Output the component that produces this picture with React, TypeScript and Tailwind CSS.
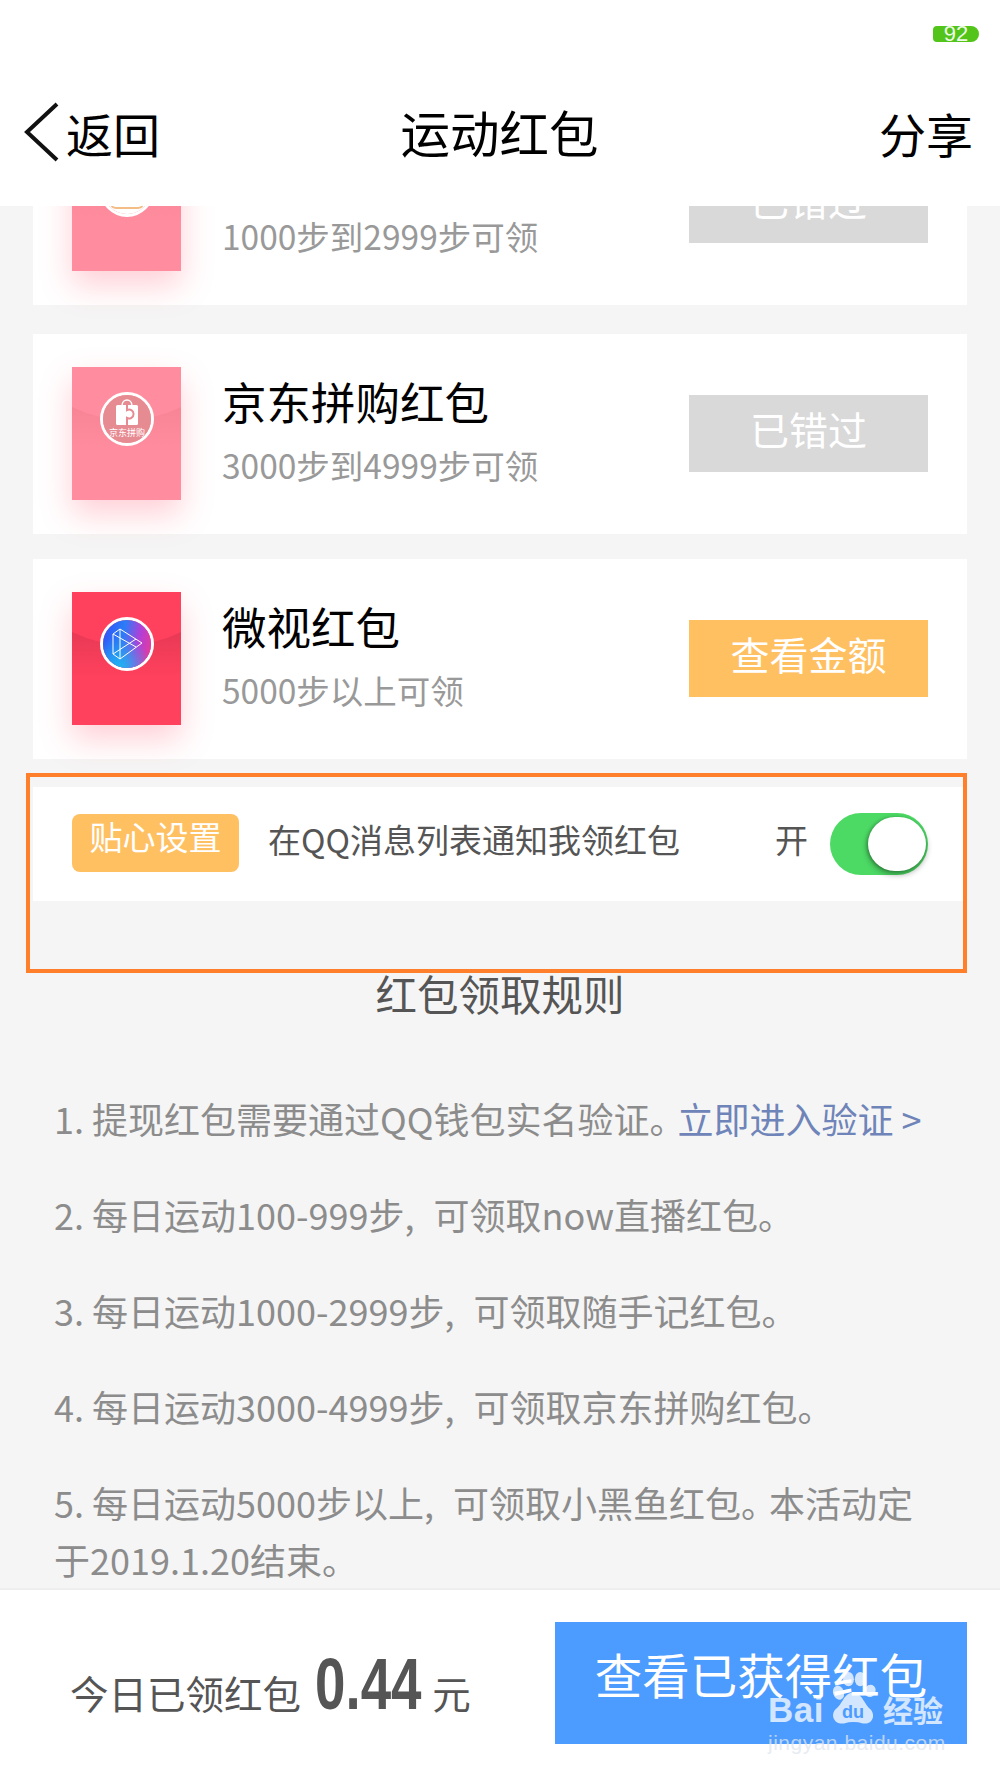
import React from "react";

const cjk = { fontFamily: '"Noto Sans CJK SC", "Noto Sans", sans-serif' };

function Envelope({ id, color, flap, children }: { id: string; color: string; flap: string; children?: React.ReactNode }) {
  return (
    <div className="relative h-[133px] w-[109px] shrink-0 shadow-[0_14px_30px_0_rgba(255,65,93,0.25)]" style={{ background: color }}>
      <svg className="absolute left-0 top-0" width="109" height="133" viewBox="0 0 109 133">
        <defs>
          <linearGradient id={id} x1="0" y1="40" x2="0" y2="85" gradientUnits="userSpaceOnUse">
            <stop offset="0" stopColor={flap} stopOpacity="0.65" />
            <stop offset="1" stopColor={flap} stopOpacity="0" />
          </linearGradient>
        </defs>
        <path d="M0 40 Q55 66 109 40 L109 85 L0 85 Z" fill={`url(#${id})`} />
      </svg>
      <div className="absolute left-[28px] top-[25px] h-[54px] w-[54px] overflow-hidden rounded-full border-[3px] border-white">
        {children}
      </div>
    </div>
  );
}

function Card({ title, sub, btn, active, icon }: { title: string; sub: string; btn: string; active?: boolean; icon: React.ReactNode }) {
  return (
    <div className="flex h-[200px] items-start bg-white px-[39px] pt-[33px]">
      {icon}
      <div className="ml-[41px] flex-1">
        <div className="mt-[4px] h-[60px] text-[44.5px] leading-[60px] text-black">{title}</div>
        <div className="mt-[12px] text-[33.5px] leading-[44px] text-[#999999]">{sub}</div>
      </div>
      <div className={`mt-[28px] flex h-[77px] w-[239px] items-center justify-center pb-[10px] text-[39px] text-white ${active ? "bg-[#ffc062]" : "bg-[#d9d9d9]"}`}>
        {btn}
      </div>
    </div>
  );
}

function Rule({ children }: { children: React.ReactNode }) {
  return <p className="text-[36px] leading-[57px] text-[#8c8c8c]">{children}</p>;
}

function Comma() {
  return <span className="mr-[11px]">, </span>;
}

function Stop() {
  return <span className="tracking-[-8px]">。</span>;
}

export default function App() {
  return (
    <div className="relative flex h-[1778px] w-[1000px] flex-col overflow-hidden bg-[#f5f5f5]" style={cjk}>
      {/* Status + nav */}
      <header className="relative z-10 h-[206px] shrink-0 bg-white">
        <div className="flex h-[72px] justify-end pr-[21px] pt-[26px]">
          <div className="flex h-[16px] w-[46px] items-center justify-center rounded-l-[4px] rounded-r-[8px] bg-[#52c41a] text-[22px] leading-none text-[#eefae6]" style={{ fontFamily: '"Liberation Sans", sans-serif' }}>
            92
          </div>
        </div>
        <div className="flex h-[134px] items-center justify-between pb-[14px] pl-[24px] pr-[27px]">
          <div className="flex w-[200px] items-center text-black">
            <svg width="36" height="60" viewBox="0 0 36 60" fill="none">
              <path d="M33 2 L3 30 L33 58" stroke="#111" strokeWidth="4" />
            </svg>
            <span className="ml-[6px] text-[47px] leading-none">返回</span>
          </div>
          <div className="ml-[2px] text-[49.5px] leading-none text-black">运动红包</div>
          <div className="flex w-[200px] justify-end text-[47px] leading-none text-black">分享</div>
        </div>
      </header>

      {/* Scrolled content */}
      <main className="min-h-0 flex-1 overflow-hidden">
        <div className="-mt-[101px] px-[33px]">
          <div className="flex flex-col gap-[29px]">
            <Card
              title="随手记红包"
              sub="1000步到2999步可领"
              btn="已错过"
              icon={
                <Envelope id="a" color="#ff8d9f" flap="#f2808f">
                  <div className="flex h-full w-full items-end justify-center bg-white pb-[5px]">
                    <div className="h-[16px] w-[34px] rounded-b-[6px] border-x-[2px] border-b-[2px] border-[#f3bd85]" />
                  </div>
                </Envelope>
              }
            />
            <Card
              title="京东拼购红包"
              sub="3000步到4999步可领"
              btn="已错过"
              icon={
                <Envelope id="b" color="#ff8d9f" flap="#f2808f">
                  <div className="flex h-full w-full flex-col items-center bg-[#e78b92]">
                    <svg className="mt-[3px] shrink-0" width="24" height="30" viewBox="0 0 24 30">
                      <path d="M7 8 C7 0 17 0 17 8" fill="none" stroke="#fff" strokeWidth="1.5" />
                      <rect x="1" y="7" width="22" height="20" rx="1.5" fill="#fff" />
                      <path d="M12 5 V12 A4.5 4.5 0 1 1 12 20 V28" fill="none" stroke="#e78b92" strokeWidth="2" />
                    </svg>
                    <div className="whitespace-nowrap text-[9px] leading-[10px] text-white">京东拼购</div>
                  </div>
                </Envelope>
              }
            />
            <div className="-mt-[4px]">
              <Card
                title="微视红包"
                sub="5000步以上可领"
                btn="查看金额"
                active
                icon={
                  <Envelope id="c" color="#ff415d" flap="#dc3550">
                    <div className="flex h-full w-full items-center justify-center bg-[radial-gradient(circle_at_35%_100%,#1fb4f0_0%,rgba(31,180,240,0)_55%),linear-gradient(100deg,#3350f5_0%,#2a7df8_40%,#b040d8_70%,#f03a90_100%)]">
                      <svg width="34" height="36" viewBox="0 0 34 36" fill="none" stroke="#fff" strokeWidth="1" strokeLinejoin="round">
                        <path d="M3 8 L10 3 L32 17 L10 33 L3 28 Z" />
                        <path d="M3 8 L26 21 M10 3 V33 M3 28 L26 13" />
                      </svg>
                    </div>
                  </Envelope>
                }
              />
            </div>
          </div>

          {/* Setting row */}
          <div className="mt-[28px] flex h-[114px] items-center bg-white px-[39px]">
            <div className="mb-[2px] flex h-[58px] w-[167px] items-start justify-center rounded-[8px] bg-[#ffc062] text-[33px] leading-[44px] text-white">
              贴心设置
            </div>
            <div className="ml-[29px] flex-1 pb-[10px] text-[33px] leading-[40px] text-[#555555]">在QQ消息列表通知我领红包</div>
            <div className="mr-[22px] pb-[10px] text-[33px] leading-[40px] text-[#555555]">开</div>
            <div className="relative h-[62px] w-[98px] rounded-full bg-[#4cd964]">
              <div className="absolute right-[2px] top-[4px] h-[54px] w-[58px] rounded-full bg-white shadow-[0_3px_6px_rgba(0,0,0,0.4),-2px_0_3px_rgba(0,0,0,0.15)]" />
            </div>
          </div>

          <h2 className="mt-[62px] text-center text-[41.5px] font-normal leading-[60px] text-[#555555]">红包领取规则</h2>

          <div className="mt-[67px] flex flex-col gap-[39px] pl-[21px] pr-[20px]">
            <Rule>
              1. 提现红包需要通过QQ钱包实名验证<Stop /><span className="text-[#6f84b8]">立即进入验证 &gt;</span>
            </Rule>
            <Rule>2. 每日运动100-999步<Comma />可领取now直播红包<Stop /></Rule>
            <Rule>3. 每日运动1000-2999步<Comma />可领取随手记红包<Stop /></Rule>
            <Rule>4. 每日运动3000-4999步<Comma />可领取京东拼购红包<Stop /></Rule>
            <Rule>5. 每日运动5000步以上<Comma />可领取小黑鱼红包<Stop />本活动定于2019.1.20结束<Stop /></Rule>
          </div>
        </div>
      </main>

      {/* Footer */}
      <footer className="z-10 flex h-[190px] shrink-0 items-start border-t-2 border-[#eeeeee] bg-white pl-[70px] pr-[33px] pt-[32px]">
        <div className="flex flex-1 items-baseline pt-[32px] text-[#555555]">
          <span className="text-[38.5px] leading-[60px]">今日已领红包</span>
          <span className="ml-[14px] mr-[-23px] inline-block origin-left scale-x-[0.76] text-[72px] font-bold leading-[60px]" style={{ fontFamily: '"Liberation Sans", sans-serif' }}>
            0.44
          </span>
          <span className="text-[38.5px] leading-[60px]">元</span>
        </div>
        <div className="flex h-[122px] w-[412px] items-start justify-center bg-[#4c9bff] pt-[20px] text-[47.5px] leading-[64px] text-white">
          查看已获得红包
        </div>
      </footer>

      {/* Annotation box */}
      <div className="pointer-events-none absolute left-[26px] top-[773px] z-20 h-[200px] w-[941px] border-[4px] border-[#ff7f2a]" />

      {/* Watermark */}
      <div className="pointer-events-none absolute left-[768px] top-[1672px] z-30 w-[190px] text-white opacity-75">
        <div className="flex h-[55px] items-end">
          <span className="-mb-[5px] w-[60px] text-[35px] font-bold leading-[44px] tracking-[0.5px]" style={{ fontFamily: '"Liberation Sans", sans-serif' }}>Bai</span>
          <svg width="50" height="56" viewBox="0 0 50 62" fill="currentColor">
            <ellipse cx="9" cy="24" rx="6" ry="8" transform="rotate(-20 9 24)" />
            <ellipse cx="20" cy="9" rx="6" ry="8" />
            <ellipse cx="33" cy="9" rx="6" ry="8" />
            <ellipse cx="44" cy="22" rx="6" ry="7" transform="rotate(20 44 22)" />
            <path d="M25 24 C15 24 14 36 6 42 C-1 49 5 60 15 58 C22 56 29 56 36 58 C46 60 51 49 44 42 C37 36 35 24 25 24 Z" />
            <text x="25" y="52" textAnchor="middle" fontSize="20" fontWeight="700" fill="#4c9bff" fontFamily="Liberation Sans">du</text>
          </svg>
          <span className="ml-[5px] text-[30px] font-bold leading-[36px]">经验</span>
        </div>
        <div className="mt-[3px] text-[21px] leading-[26px] tracking-[0.5px] text-[#dfe6ee]" style={{ fontFamily: '"Liberation Sans", sans-serif' }}>jingyan.baidu.com</div>
      </div>
    </div>
  );
}
